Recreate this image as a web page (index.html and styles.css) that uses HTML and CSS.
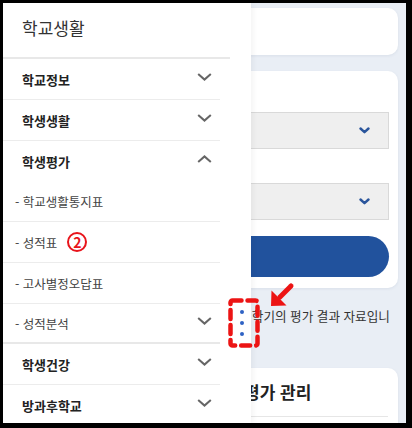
FILE: index.html
```html
<!DOCTYPE html>
<html lang="ko">
<head>
<meta charset="utf-8">
<title>학교생활</title>
<link rel="stylesheet" href="styles.css">
</head>
<body>
<div class="frame">
  <div class="screen">
    <main class="main">
      <section class="card card-top"></section>
      <section class="card card-form">
        <div class="select">
          <svg class="sel-chev" width="11" height="7" viewBox="0 0 11 7"><path d="M1.5 1.5 L5.5 5.2 L9.5 1.5" fill="none" stroke="#2a559c" stroke-width="2.4" stroke-linecap="round" stroke-linejoin="round"/></svg>
        </div>
        <div class="select select-next">
          <svg class="sel-chev" width="11" height="7" viewBox="0 0 11 7"><path d="M1.5 1.5 L5.5 5.2 L9.5 1.5" fill="none" stroke="#2a559c" stroke-width="2.4" stroke-linecap="round" stroke-linejoin="round"/></svg>
        </div>
        <button class="btn-primary" type="button"></button>
      </section>
      <p class="note">※ 해당 학기의 평가 결과 자료입니다.</p>
      <section class="card card-list">
        <h2 class="card-title">학생 평가 관리</h2>
      </section>
    </main>

    <aside class="drawer">
      <div class="drawer-head">학교생활</div>
      <ul class="menu">
        <li class="menu-row">학교정보
          <svg class="chev" width="15" height="8" viewBox="0 0 15 8"><path d="M1.2 1 L7.5 6.6 L13.8 1" fill="none" stroke="#666" stroke-width="2"/></svg>
        </li>
        <li class="menu-row">학생생활
          <svg class="chev" width="15" height="8" viewBox="0 0 15 8"><path d="M1.2 1 L7.5 6.6 L13.8 1" fill="none" stroke="#666" stroke-width="2"/></svg>
        </li>
        <li class="menu-row menu-row-open">학생평가
          <svg class="chev" width="15" height="8" viewBox="0 0 15 8"><path d="M1.2 7 L7.5 1.4 L13.8 7" fill="none" stroke="#666" stroke-width="2"/></svg>
        </li>
        <li class="sub-row">- 학교생활통지표</li>
        <li class="sub-row">- 성적표 <span class="badge-num">2</span></li>
        <li class="sub-row">- 고사별정오답표</li>
        <li class="sub-row sub-row-last">- 성적분석
          <svg class="chev" width="15" height="8" viewBox="0 0 15 8"><path d="M1.2 1 L7.5 6.6 L13.8 1" fill="none" stroke="#666" stroke-width="2"/></svg>
        </li>
        <li class="menu-row">학생건강
          <svg class="chev" width="15" height="8" viewBox="0 0 15 8"><path d="M1.2 1 L7.5 6.6 L13.8 1" fill="none" stroke="#666" stroke-width="2"/></svg>
        </li>
        <li class="menu-row">방과후학교
          <svg class="chev" width="15" height="8" viewBox="0 0 15 8"><path d="M1.2 1 L7.5 6.6 L13.8 1" fill="none" stroke="#666" stroke-width="2"/></svg>
        </li>
      </ul>
      <div class="drawer-handle"><i></i><i></i><i></i></div>
    </aside>
  </div>

  <svg class="annot" width="412" height="428" viewBox="0 0 412 428">
    <rect x="230.5" y="300.5" width="27" height="45" rx="2" fill="none" stroke="#ec1414" stroke-width="4.5" stroke-dasharray="9 6" stroke-linecap="round"/>
    <line x1="280" y1="297" x2="291" y2="286" stroke="#ec1414" stroke-width="5" stroke-linecap="round"/>
    <polygon points="271,306 271.5,290.5 286.5,305.5" fill="#ec1414"/>
  </svg>
</div>
</body>
</html>
```
FILE: styles.css
```css
* {
  box-sizing: border-box;
  margin: 0;
  padding: 0;
}

body {
  background: #000;
  font-family: "Noto Sans CJK KR", "Noto Sans", sans-serif;
}

.frame {
  position: relative;
  width: 412px;
  height: 428px;
  padding: 3px 6px 5px 3px;
  background: #000;
}

.screen {
  position: relative;
  width: 403px;
  height: 420px;
  background: #e9eef5;
  overflow: hidden;
}

/* ---------- page content (behind the drawer) ---------- */
.main {
  display: flex;
  flex-direction: column;
  padding: 5px 8px 0 8px;
}

.card {
  background: #fff;
  border-radius: 10px;
  box-shadow: 0 1px 3px rgba(40, 60, 100, 0.08);
}

.card-top {
  height: 47px;
}

.card-form {
  margin-top: 16px;
  padding: 41px 9px 11px 16px;
  display: flex;
  flex-direction: column;
}

.select {
  height: 37px;
  display: flex;
  align-items: center;
  justify-content: flex-end;
  padding: 0 18px 0 12px;
  background: #efefef;
  border: 1px solid #d9d9d9;
}

.select-next {
  margin-top: 34px;
}

.btn-primary {
  margin-top: 16px;
  height: 41px;
  border: none;
  border-radius: 21px;
  background: #21529d;
}

.note {
  align-self: flex-end;
  width: 187px;
  margin: 19px 2px 0 0;
  font-size: 12.6px;
  line-height: 18px;
  color: #333;
}

.card-list {
  margin-top: 25px;
  padding: 12px 10px 40px 16px;
}

.card-title {
  padding: 0 0 12px 181px;
  font-size: 17px;
  line-height: 24px;
  font-weight: 700;
  color: #222;
  border-bottom: 1px solid #e6e6e6;
}

/* ---------- drawer ---------- */
.drawer {
  position: absolute;
  left: 0;
  top: 0;
  bottom: 0;
  width: 248px;
  background: #fff;
  box-shadow: 2px 0 6px rgba(0, 0, 0, 0.05);
}

.drawer-head {
  width: 227px;
  height: 56px;
  display: flex;
  align-items: center;
  padding: 0 19px 6px 19px;
  font-size: 17px;
  color: #333;
  border-bottom: 2px solid #e8e8e8;
}

.menu {
  width: 217px;
  list-style: none;
}

.menu-row,
.sub-row {
  display: flex;
  align-items: center;
  justify-content: space-between;
  border-bottom: 1px solid #ececec;
}

.menu-row {
  height: 41px;
  padding: 0 8px 0 19px;
  font-size: 13px;
  font-weight: 700;
  color: #222;
}

.menu-row-open {
  height: 40px;
  border-bottom: none;
}

.sub-row {
  height: 41px;
  padding: 0 8px 0 12px;
  font-size: 12.5px;
  color: #444;
  justify-content: flex-start;
}

.sub-row .chev {
  margin-left: auto;
}

.sub-row-last {
  height: 40px;
  border-bottom: 2px solid #e8e8e8;
}

.chev {
  margin-top: -5px;
}

.badge-num {
  display: inline-flex;
  align-items: center;
  justify-content: center;
  width: 20px;
  height: 20px;
  margin-left: 10px;
  border: 2px solid #e8141b;
  border-radius: 50%;
  color: #e8141b;
  font-size: 14px;
  font-weight: 700;
  line-height: 1;
}

.drawer-handle {
  position: absolute;
  left: 237px;
  top: 307px;
  display: flex;
  flex-direction: column;
  gap: 7px;
}

.drawer-handle i {
  display: block;
  width: 4px;
  height: 4px;
  border-radius: 50%;
  background: #2f62c4;
}

/* ---------- annotation overlay ---------- */
.annot {
  position: absolute;
  left: 0;
  top: 0;
  pointer-events: none;
}
```
